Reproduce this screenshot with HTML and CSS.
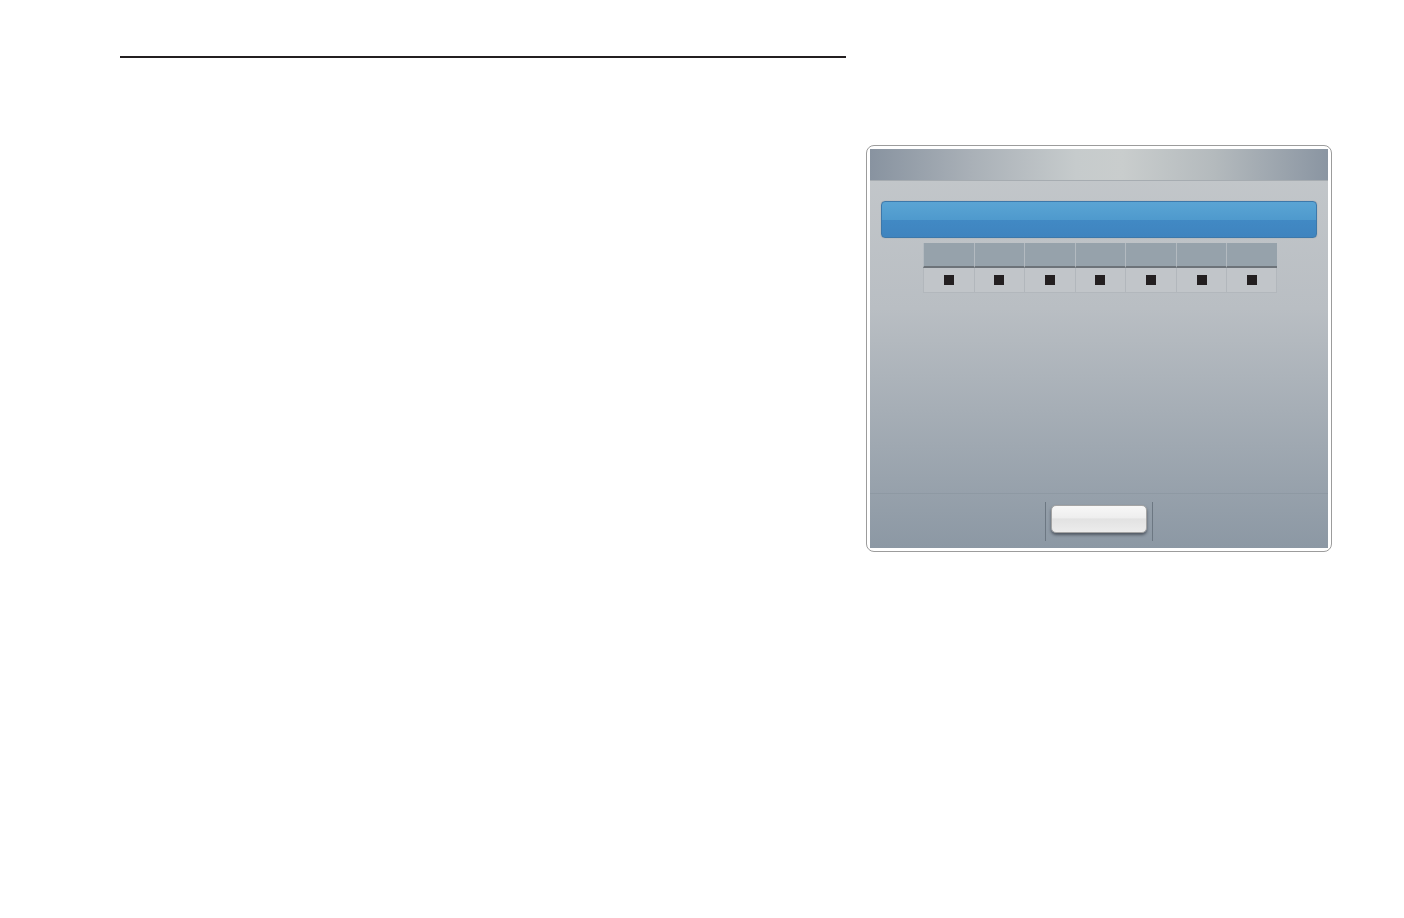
FILE: index.html
```html
<!DOCTYPE html>
<html lang="en">
<head>
    <meta charset="UTF-8">
    <meta name="viewport" content="width=device-width, initial-scale=1.0">
    <title>Dialog</title>
    <link rel="stylesheet" href="styles.css">
</head>
<body>

<div class="page">
    <div class="rule"></div>

    <div class="dialog">
        <div class="panel">
            <div class="panel-head"></div>
            <div class="progress-bar"></div>

            <div class="days">
                <div class="day-head"></div>
                <div class="day-head"></div>
                <div class="day-head"></div>
                <div class="day-head"></div>
                <div class="day-head"></div>
                <div class="day-head"></div>
                <div class="day-head"></div>
                <div class="day-cell"><span class="mark"></span></div>
                <div class="day-cell"><span class="mark"></span></div>
                <div class="day-cell"><span class="mark"></span></div>
                <div class="day-cell"><span class="mark"></span></div>
                <div class="day-cell"><span class="mark"></span></div>
                <div class="day-cell"><span class="mark"></span></div>
                <div class="day-cell"><span class="mark"></span></div>
            </div>

            <div class="footer">
                <div class="footer-slot">
                    <button class="ok-button"></button>
                </div>
            </div>
        </div>
    </div>
</div>

</body>
</html>
```

FILE: styles.css
```css
body {
    margin: 0;
    background: #fff;
    font-family: 'Liberation Sans', Arial, sans-serif;
}
.page {
    padding: 56px 0 0 120px;
}
.rule {
    width: 726px;
    height: 2px;
    background: #231f20;
}
.dialog {
    margin: 87px 0 0 746px;
    width: 466px;
    height: 407px;
    box-sizing: border-box;
    border: 1px solid #9c9c9c;
    border-radius: 8px;
    padding: 3px;
    background: #fff;
}
.panel {
    height: 100%;
    display: flex;
    flex-direction: column;
    background: linear-gradient(#c4c8cb 0%, #b9bec3 40%, #8c98a4 100%);
}
.panel-head {
    height: 31px;
    background: linear-gradient(90deg, #8893a0 0%, #a9b0b7 22%, #c6cbcc 45%, #c9cdcd 55%, #b4babd 75%, #8a95a2 100%);
    border-bottom: 1px solid #a6acb1;
}
.progress-bar {
    margin: 20px 11px 0 11px;
    height: 35px;
    border: 1px solid #3d78aa;
    border-radius: 4px;
    background: linear-gradient(#5aa4d4 0%, #4f9acd 50%, #4189c4 52%, #3f84bf 100%);
    box-shadow: 0 0 1px rgba(0, 0, 0, 0.3);
}
.days {
    margin: 5px 0 0 53px;
    width: 354px;
    display: grid;
    grid-template-columns: repeat(7, 1fr);
}
.day-head {
    height: 23px;
    background: #96a2ab;
    border-left: 1px solid #b3bac0;
    border-bottom: 2px solid #6d7379;
}
.day-cell {
    height: 24px;
    display: flex;
    align-items: center;
    justify-content: center;
    background: #c1c5c9;
    border-left: 1px solid #b2b7bc;
    border-bottom: 1px solid #b2b7bc;
}
.day-cell:last-child {
    border-right: 1px solid #b2b7bc;
}
.mark {
    width: 10px;
    height: 10px;
    background: #231f20;
}
.footer {
    margin-top: auto;
    display: flex;
    justify-content: center;
    border-top: 1px solid rgba(120, 130, 140, 0.25);
    padding: 8px 0 7px;
}
.footer-slot {
    border-left: 1px solid #6c7782;
    border-right: 1px solid #6c7782;
    padding: 3px 5px 8px;
}
.ok-button {
    display: block;
    width: 96px;
    height: 28px;
    border: 1px solid #a4a4a4;
    border-radius: 5px;
    background: linear-gradient(#f7f7f7 0%, #eeeeee 45%, #e2e2e2 50%, #ececec 100%);
    box-shadow: 0 2px 3px rgba(40, 45, 55, 0.6);
    padding: 0;
}
```
